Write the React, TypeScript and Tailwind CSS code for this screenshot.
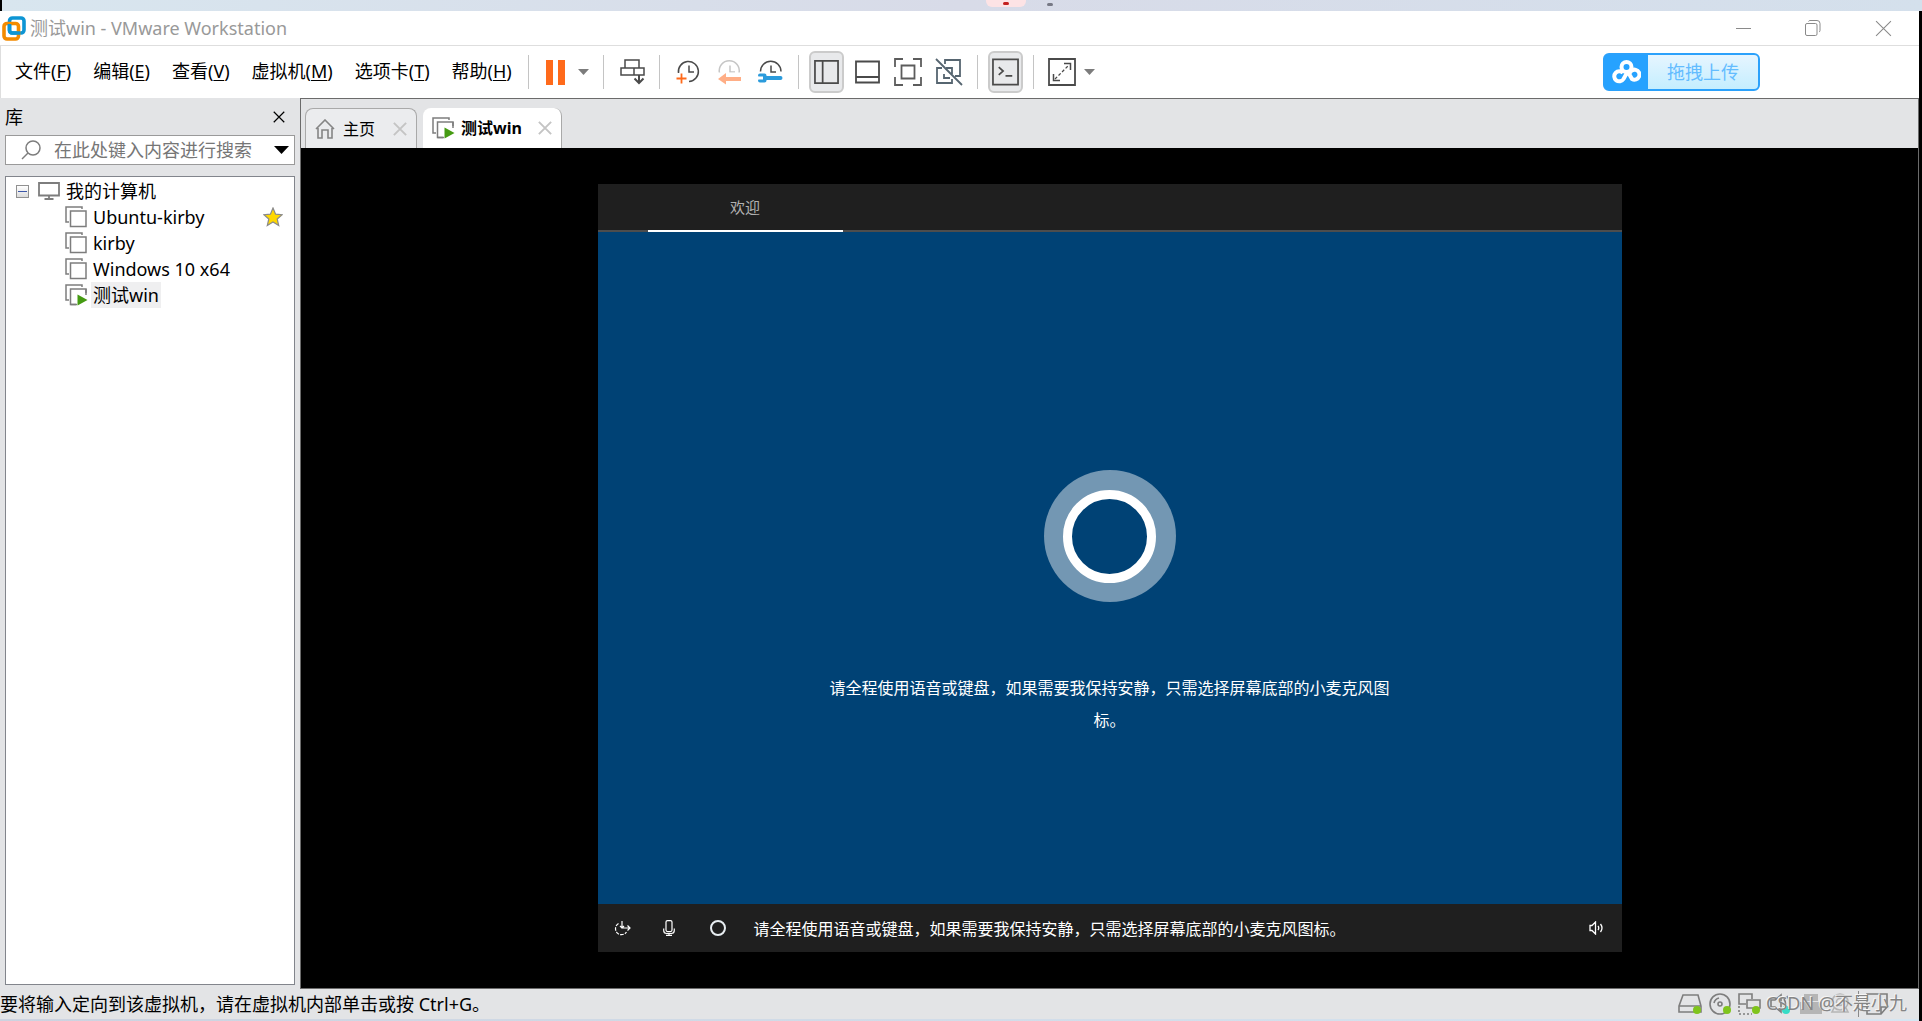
import React from "react";

const sans = "font-['Noto_Sans','Noto_Sans_CJK_SC',sans-serif]";

const VmwareLogo = () => (
  <svg width="24" height="25" viewBox="0 0 24 25" fill="none">
    <rect x="7.5" y="2" width="14.5" height="15" rx="3" stroke="#0d95d4" strokeWidth="3.6" />
    <rect x="2" y="7.5" width="14.5" height="15.5" rx="3" stroke="#f38b00" strokeWidth="3.6" />
    <path d="M7.5 8v6.5a2.5 2.5 0 0 0 2.500 2.500H18" stroke="#0d95d4" strokeWidth="3.600" />
  </svg>
);

const VmIcon = ({ running }: { running?: boolean }) => (
  <svg width="23" height="22" viewBox="0 0 23 22" fill="none" className="shrink-0">
    <path d="M17 3V1H1v15h3" stroke="#7d7d7d" strokeWidth="1.500" />
    <rect x="5.500" y="5" width="15.500" height="15.500" fill="#fff" stroke="#7d7d7d" strokeWidth="1.500" />
    {running && (
      <>
        <path d="M11 9h12v13H11z" fill="#fff" />
        <path d="M21 5v6M5.500 20.500H12" stroke="#7d7d7d" strokeWidth="1.500" />
        <path d="M12.500 10.500v11l10-5.500z" fill="#459b12" />
      </>
    )}
  </svg>
);

const CloseX = ({ size, color, width = 1 }: { size: number; color: string; width?: number }) => (
  <svg width={size} height={size} viewBox="0 0 16 16" stroke={color} strokeWidth={width}>
    <path d="M1 1l14 14M15 1L1 15" />
  </svg>
);

const Caret = () => (
  <svg width="11" height="6" viewBox="0 0 11 6">
    <path d="M0 0h11L5.500 6z" fill="#7c7c7c" />
  </svg>
);

const Sep = () => <span className="h-[34px] w-px shrink-0 bg-[#c4c4c4]" />;

const Clock = ({ color }: { color: string }) => (
  <g stroke={color} strokeWidth="1.500">
    <path d="M13 6.500V13h5" />
  </g>
);

const menus = [
  ["文件", "F"],
  ["编辑", "E"],
  ["查看", "V"],
  ["虚拟机", "M"],
  ["选项卡", "T"],
  ["帮助", "H"],
];

function TitleBar() {
  return (
    <header className="flex h-[35px] shrink-0 items-center border-b border-[#dedede] bg-white pl-0.5 pr-px">
      <VmwareLogo />
      <h1 className="ml-1 grow text-lg leading-6 text-[#999]">测试win - VMware Workstation</h1>
      <button aria-label="最小化" className="flex w-[70px] justify-center">
        <svg width="15" height="15" stroke="#8a8a8a"><path d="M0 7.500h15" /></svg>
      </button>
      <button aria-label="还原" className="flex w-[70px] justify-center">
        <svg width="16" height="16" viewBox="0 0 16 16" fill="none" stroke="#8a8a8a">
          <rect x="0.500" y="3.500" width="11.500" height="12" rx="1.500" />
          <path d="M3.500 1.500Q4 .5 5 .5h7a3 3 0 0 1 3 3v7q0 1-1 1.500" />
        </svg>
      </button>
      <button aria-label="关闭" className="flex w-[70px] justify-center">
        <CloseX size={17} color="#8a8a8a" />
      </button>
    </header>
  );
}

function MenuBar() {
  return (
    <div className="flex h-[52px] shrink-0 items-center border-l border-[#dedede] bg-white">
      <nav className="flex shrink-0 gap-[22px] pb-0.5 pl-3.5 text-lg leading-6 text-black">
        {menus.map(([label, key]) => (
          <button key={key}>
            {label}(<span className="underline underline-offset-2">{key}</span>)
          </button>
        ))}
      </nav>
      <div className="ml-4 flex shrink-0 items-center">
        <Sep />
        <button aria-label="暂停" className="ml-[17px]">
          <svg width="20" height="25" fill="#ff6a1b"><path d="M0 0h7v25H0zM12 0h7v25h-7z" /></svg>
        </button>
        <button aria-label="电源选项" className="ml-3 mr-3.5"><Caret /></button>
        <Sep />
        <button aria-label="发送 Ctrl+Alt+Del" className="ml-4 mr-3.5">
          <svg width="25" height="26" viewBox="0 0 25 26" fill="none" stroke="#4a4a4a" strokeWidth="1.500">
            <path d="M5 1h14v8H5zM1 9h23v7H1zM14 9v7" />
            <path d="M19 16v8M14.500 19.500l4.500 4.500 4.500-4.500" strokeWidth="2" />
          </svg>
        </button>
        <Sep />
        <button aria-label="拍摄快照" className="ml-4">
          <svg width="24" height="26" viewBox="0 0 24 26" fill="none">
            <path d="M2.500 14A10 10 0 1 1 13 22.500" stroke="#4a4a4a" strokeWidth="1.500" />
            <Clock color="#4a4a4a" />
            <path d="M5.500 14.500v10M.5 19.500h10" stroke="#ff6a1b" strokeWidth="1.800" />
          </svg>
        </button>
        <button aria-label="恢复快照" className="ml-[17px]">
          <svg width="25" height="26" viewBox="0 0 25 26" fill="none">
            <path d="M2.500 14a10 10 0 1 1 19.500 0" stroke="#c6c6c6" strokeWidth="1.500" />
            <Clock color="#c6c6c6" />
            <path d="M0 13.500h25V26H0z" fill="#fff" />
            <path d="M1 20l8-6v4h15v4H9v3.500z" fill="#ffae86" />
          </svg>
        </button>
        <button aria-label="管理快照" className="ml-4 mr-3.5">
          <svg width="26" height="26" viewBox="0 0 26 26" fill="none">
            <path d="M2.500 12.500a10 10 0 0 1 20.500 0" stroke="#4a4a4a" strokeWidth="1.500" />
            <Clock color="#4a4a4a" />
            <path d="M2 16.500h4.500v5H2M7 19h15.500" stroke="#2b9bdc" strokeWidth="4" strokeLinejoin="round" strokeLinecap="round" />
            <path d="M0 17.500h5v3H0z" fill="#fff" />
          </svg>
        </button>
        <Sep />
        <button aria-label="显示库" className="ml-2.5 flex h-[42px] w-[35px] items-center justify-center rounded-md border-2 border-[#cbcbcb] bg-[#e8e9eb]">
          <svg width="25" height="26" viewBox="0 0 26 26" fill="none" stroke="#4a4a4a" strokeWidth="1.800">
            <path d="M1 1.500h24v23H1zM9 1.500v23" />
          </svg>
        </button>
        <button aria-label="缩略图栏" className="ml-[11px]">
          <svg width="25" height="25" viewBox="0 0 25 25" fill="none" stroke="#4a4a4a" strokeWidth="1.800">
            <path d="M1 1.500h23v21H1zM1 17h23" />
          </svg>
        </button>
        <button aria-label="全屏" className="ml-3.5">
          <svg width="28" height="28" viewBox="0 0 28 28" fill="none" stroke="#5c5c5c" strokeWidth="1.800">
            <path d="M1 9V1h8M19 1h8v8M27 19v8h-8M9 27H1v-8M7.500 7.500h13v13h-13z" />
          </svg>
        </button>
        <button aria-label="Unity" className="ml-[13px] mr-3.5">
          <svg width="28" height="28" viewBox="0 0 28 28" fill="none" stroke="#566570" strokeWidth="1.800">
            <path d="M10 6V2h15v16h-5M7 10H2v15h15v-4M11 10h6v6M9 16v4h6M1 1l26 26" />
          </svg>
        </button>
        <Sep />
        <button aria-label="控制台视图" className="mx-2.5 flex h-[42px] w-[35px] items-center justify-center rounded-md border-2 border-[#cbcbcb] bg-[#e8e9eb]">
          <svg width="27" height="28" viewBox="0 0 28 28" fill="none" stroke="#4a4a4a" strokeWidth="1.800">
            <path d="M1 1h26v26H1zM7 9l4.500 4L7 17M14 18h7" />
          </svg>
        </button>
        <Sep />
        <button aria-label="拉伸客户机" className="ml-3.5">
          <svg width="28" height="28" viewBox="0 0 28 28" fill="none" stroke="#4a4a4a" strokeWidth="1.800">
            <path d="M1 1h26v26H1z" />
            <path d="M16 5.500h6.500V12M5.500 16v6.500H12" strokeWidth="1.500" />
            <path d="M7 21L21 7" strokeDasharray="3 2" strokeWidth="1.300" />
          </svg>
        </button>
        <button aria-label="拉伸选项" className="ml-2"><Caret /></button>
      </div>
      <button className="ml-auto mr-[159px] flex h-[38px] shrink-0 overflow-hidden rounded-md border-2 border-[#2ba1fb] bg-[#26a2ff]">
        <span className="flex h-full w-[43px] items-center justify-center">
          <svg width="29" height="24" viewBox="0 0 29 24" fill="none" stroke="#fff" strokeWidth="4">
            <circle cx="14.500" cy="7" r="5" />
            <path d="M16 11l-4.500 8A5 5 0 1 1 11 13M16 12l4 7A5 5 0 1 0 17.500 14" />
          </svg>
        </span>
        <span className="flex h-full w-[110px] items-center justify-center bg-linear-to-b from-[#e6f5ff] to-[#c4eeff] text-lg text-[#63bcff]">
          拖拽上传
        </span>
      </button>
    </div>
  );
}

const machines = [
  { name: "Ubuntu-kirby", star: true },
  { name: "kirby" },
  { name: "Windows 10 x64" },
  { name: "测试win", running: true },
];

function Library() {
  return (
    <aside className="flex w-[300px] shrink-0 flex-col bg-[#e3e4e6] pl-[5px] pr-[5px]">
      <div className="flex h-[37px] items-center justify-between pr-[10px]">
        <h2 className="text-lg leading-6 text-black">库</h2>
        <button aria-label="关闭库"><CloseX size={12} color="#000" width={1.6} /></button>
      </div>
      <div className="flex h-[30px] shrink-0 items-center border border-[#9a9a9a] bg-white pl-[15px] pr-[5px]">
        <svg width="20" height="20" viewBox="0 0 20 20" fill="none" stroke="#7d7d7d" strokeWidth="1.500" className="shrink-0">
          <circle cx="12" cy="8" r="7" />
          <path d="M7 13l-6 6" />
        </svg>
        <input
          type="text"
          aria-label="搜索"
          placeholder="在此处键入内容进行搜索"
          className="ml-[13px] min-w-0 grow text-lg leading-6 outline-none placeholder:text-[#767676]"
        />
        <button aria-label="搜索选项">
          <svg width="15" height="8"><path d="M0 0h15L7.500 8z" /></svg>
        </button>
      </div>
      <div className="mb-1 mt-[11px] grow border border-[#82858c] bg-white pt-px text-lg text-black">
        <div className="flex h-[26px] items-center pl-2.5">
          <button aria-label="折叠" className="flex size-[13px] items-center justify-center border border-[#919191] bg-linear-to-b from-white to-[#dcdcdc]">
            <span className="h-px w-[9px] bg-[#3c57a8]" />
          </button>
          <svg width="22" height="18" viewBox="0 0 22 18" fill="none" stroke="#7d7d7d" strokeWidth="1.800" className="ml-[9px] mr-1.5">
            <path d="M1 1h20v12.500H1zM11 13.500V17M6.500 17h9" />
          </svg>
          我的计算机
        </div>
        <ul>
          {machines.map((m) => (
            <li key={m.name} className="flex h-[26px] items-center pl-[59px] pr-[11px]">
              <VmIcon running={m.running} />
              <span className={m.running ? "ml-[3px] bg-[#efeff0] px-0.5 leading-[26px]" : "ml-[5px] leading-[26px]"}>{m.name}</span>
              {m.star && (
                <svg width="20" height="20" viewBox="0 0 20 20" className="ml-auto">
                  <path d="M10 1l2.600 6.200 6.600.5-5 4.300 1.500 6.500L10 15l-5.700 3.500L5.800 12l-5-4.300 6.600-.5z" fill="#ffd800" stroke="#8a8a8a" strokeWidth="1.200" />
                </svg>
              )}
            </li>
          ))}
        </ul>
      </div>
    </aside>
  );
}

function Tabs() {
  return (
    <div className="flex h-[49px] shrink-0 items-end gap-1.5 bg-[#e3e4e6] pl-1 text-base text-black">
      <div className="flex h-10 items-center rounded-t-lg border border-b-0 border-[#a9a9a9] bg-[#ebecee] px-[9px]">
        <button className="flex items-center gap-2">
          <svg width="20" height="20" viewBox="0 0 20 20" fill="none" stroke="#858585" strokeWidth="1.600">
            <path d="M1 10L10 1l9 9M3 9v10h4v-8h6v8h4V9" />
          </svg>
          主页
        </button>
        <button aria-label="关闭主页" className="ml-[18px]"><CloseX size={14} color="#c4c4c4" width={2.2} /></button>
      </div>
      <div className="flex h-10 items-center rounded-t-lg border-r border-[#a9a9a9] bg-white px-[9px]">
        <button className="flex items-center gap-1.5 font-bold">
          <VmIcon running />
          <span>测试win</span>
        </button>
        <button aria-label="关闭测试win" className="ml-4"><CloseX size={14} color="#c4c4c4" width={2.2} /></button>
      </div>
    </div>
  );
}

const Mic = () => (
  <svg width="12" height="16" viewBox="0 0 12 16" fill="none" stroke="#fff" strokeWidth="1.200">
    <rect x="3" y=".6" width="6" height="11" rx="1.500" />
    <path d="M.7 8.500v2q0 3 3 3h4.600q3 0 3-3v-2M6 13.500v2M3 15.400h6" />
  </svg>
);

function Guest() {
  return (
    <main className="flex grow items-center justify-center bg-black font-['Noto_Sans_CJK_SC',sans-serif]">
      <div className="flex aspect-[4/3] w-full max-w-[1024px] flex-col bg-[#004275] text-white">
        <div className="flex h-12 shrink-0 border-b-2 border-[#4d4d4d] bg-[#1f1f1f] pl-[50px]">
          <div className="-mb-0.5 flex w-[195px] items-center justify-center border-b-2 border-white text-[15px] text-[#b0b0b0]">
            欢迎
          </div>
        </div>
        <div className="flex grow flex-col items-center pt-[238px]">
          <div className="flex size-[132px] items-center justify-center rounded-full bg-[#7397b3]">
            <div className="size-[93px] rounded-full border-9 border-white bg-[#004275]" />
          </div>
          <p className="mt-[69px] w-[570px] text-center text-base leading-8">
            请全程使用语音或键盘，如果需要我保持安静，只需选择屏幕底部的小麦克风图标。
          </p>
        </div>
        <div className="flex h-12 shrink-0 items-center bg-[#1f1f1f] pl-4 pr-[18px] text-base">
          <button aria-label="轻松使用" className="w-[49px]">
            <svg width="17" height="17" viewBox="0 0 17 17" fill="none" stroke="#fff" strokeWidth="1.200">
              <path d="M8 1v7h8M13.500 5.500L16 8l-2.500 2.500M6 6l2 2 2-2" />
              <path d="M4.500 3.500A6 6 0 1 0 12.500 12" strokeDasharray="3.500 1.200" />
            </svg>
          </button>
          <button aria-label="麦克风" className="w-[47px]"><Mic /></button>
          <button aria-label="Cortana" className="size-4 rounded-full border-2 border-[#e8eef2]" />
          <span className="ml-7 grow">请全程使用语音或键盘，如果需要我保持安静，只需选择屏幕底部的小麦克风图标。</span>
          <button aria-label="音量">
            <svg width="15" height="14" viewBox="0 0 15 14" fill="none" stroke="#fff" strokeWidth="1.300">
              <path d="M1 4.500h2l3.500-3.500v12L3 9.500H1zM9 5q1.500 2 0 4M11.500 3q3 4 0 8" />
            </svg>
          </button>
        </div>
      </div>
    </main>
  );
}

const Dot = ({ x, color = "#7fc41c" }: { x: number; color?: string }) => <circle cx={x} cy="17" r="4" fill={color} stroke="none" />;

function StatusBar() {
  return (
    <footer className="relative flex h-[30px] shrink-0 items-center justify-between bg-[#e3e4e6] pr-[31px] text-lg text-black">
      <span className="leading-6">要将输入定向到该虚拟机，请在虚拟机内部单击或按 Ctrl+G。</span>
      <div className="flex items-center gap-[7px]">
        <svg width="24" height="22" viewBox="0 0 24 22" fill="none" stroke="#7d7d7d" strokeWidth="1.600">
          <path d="M1 13L5 2h15l3 11v6H1zM1 13h22" />
          <Dot x={19} />
        </svg>
        <svg width="22" height="22" viewBox="0 0 22 22" fill="none" stroke="#7d7d7d" strokeWidth="1.600">
          <circle cx="11" cy="11" r="10" /><circle cx="11" cy="11" r="2" /><path d="M5 10q1-4 5-5" />
          <Dot x={18} />
        </svg>
        <svg width="23" height="22" viewBox="0 0 23 22" fill="none" stroke="#7d7d7d" strokeWidth="1.600">
          <path d="M8 11H1V1h13v5M9 7h13v8H9z" /><path d="M1 13v8h13" strokeDasharray="2 2" />
          <Dot x={18} />
        </svg>
        <svg width="23" height="22" viewBox="0 0 23 22" fill="none" stroke="#7d7d7d" strokeWidth="1.600" className="ml-0.5">
          <path d="M1 7h4l6-5v17l-6-5H1zM14 6q3 5 0 8M17 3q3 4 2 8" />
          <Dot x={16} color="#36dcc6" />
        </svg>
        <svg width="22" height="22" viewBox="0 0 22 22" fill="#b5b5b5"><path d="M4 1h14v7H4zM0 9h22v12H0z" /></svg>
        <svg width="22" height="22" viewBox="0 0 22 22" fill="none" stroke="#b5b5b5" strokeWidth="1.600">
          <circle cx="11" cy="9" r="8" /><circle cx="11" cy="9" r="3.500" /><path d="M5 15l-2 4h16l-2-4" />
        </svg>
        <span className="h-[26px] w-px bg-[#8a8a8a]" />
        <svg width="22" height="22" viewBox="0 0 22 22" fill="none" stroke="#7d7d7d" strokeWidth="1.600">
          <path d="M1 1h20v13l-6 7H1zM21 14h-6v7" />
        </svg>
      </div>
      <span className="absolute right-3 top-0.5 text-lg leading-6 text-[#858585] [text-shadow:-1px_-1px_0_#f5f5f5]">CSDN @不是小九</span>
    </footer>
  );
}

export default function App() {
  return (
    <div className={`flex h-screen flex-col overflow-hidden bg-black ${sans}`}>
      <div className="flex h-[11px] shrink-0 items-start justify-center border-l-2 border-black bg-linear-to-r from-[#d8e6ef] via-[#d8dbe8] to-[#d4e0ec]">
        <div className="ml-[115px] flex gap-[21px]">
          <span className="flex h-[7px] w-10 items-center justify-center rounded-b-md bg-[#fde3e5]"><i className="h-[3px] w-1.5 rounded-full bg-[#c4201f]" /></span>
          <span className="mt-[3px] h-[3px] w-1.5 rounded-full bg-[#777985]" />
        </div>
      </div>
      <div className="mr-[3px] flex min-h-0 grow flex-col">
        <TitleBar />
        <MenuBar />
        <div className="flex min-h-0 grow bg-[#e3e4e6]">
          <Library />
          <section className="flex min-w-0 grow flex-col border border-[#6b6b6b]">
            <Tabs />
            <Guest />
          </section>
        </div>
        <StatusBar />
        <div className="h-0.5 shrink-0 bg-linear-to-r from-[#ccd3e0] to-[#d6e6f2]" />
      </div>
    </div>
  );
}
